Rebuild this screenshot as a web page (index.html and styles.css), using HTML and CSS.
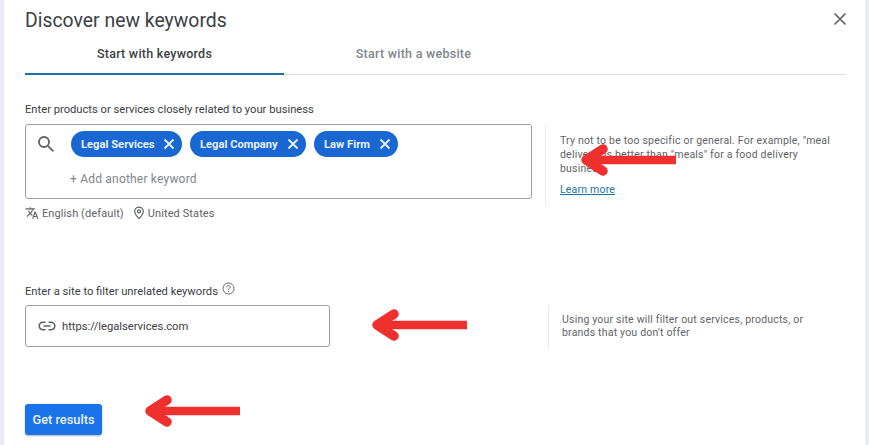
FILE: index.html
```html
<!DOCTYPE html>
<html lang="en">
<head>
    <meta charset="UTF-8">
    <meta name="viewport" content="width=device-width, initial-scale=1.0">
    <title>Discover new keywords</title>
    <link rel="stylesheet" href="styles.css">
</head>
<body>
    <div class="dialog">
        <div class="header">
            <h1>Discover new keywords</h1>
            <svg class="close" width="14" height="14" viewBox="0 0 14 14"><path d="M1.5 1.5l11 11M12.5 1.5l-11 11"/></svg>
        </div>

        <div class="tabs">
            <div class="tab active">Start with keywords</div>
            <div class="tab">Start with a website</div>
        </div>

        <div class="label first-label">Enter products or services closely related to your business</div>
        <div class="row">
            <div class="keyword-box">
                <svg class="search" width="18" height="18" viewBox="0 0 18 18"><circle cx="7" cy="7" r="5"/><path d="M10.8 10.8l5.6 5.6"/></svg>
                <div class="keyword-main">
                    <div class="chips">
                        <span class="chip chip-services">Legal Services<svg width="12" height="12" viewBox="0 0 12 12"><path d="M1.5 1.5l9 9M10.5 1.5l-9 9"/></svg></span>
                        <span class="chip chip-company">Legal Company<svg width="12" height="12" viewBox="0 0 12 12"><path d="M1.5 1.5l9 9M10.5 1.5l-9 9"/></svg></span>
                        <span class="chip chip-firm">Law Firm<svg width="12" height="12" viewBox="0 0 12 12"><path d="M1.5 1.5l9 9M10.5 1.5l-9 9"/></svg></span>
                    </div>
                    <div class="add-keyword">+ Add another keyword</div>
                </div>
            </div>
            <div class="hint hint-top">
                <p>Try not to be too specific or general. For example, "meal delivery" is better than "meals" for a food delivery business</p>
                <a href="#">Learn more</a>
            </div>
        </div>

        <div class="meta">
            <svg class="translate" width="14" height="14" viewBox="0 0 24 24"><path d="M12.87 15.07l-2.54-2.51.03-.03A17.5 17.5 0 0 0 14.07 6H17V4h-7V2H8v2H1v2h11.17C11.5 7.92 10.44 9.75 9 11.35 8.07 10.32 7.3 9.19 6.69 8h-2c.73 1.63 1.73 3.17 2.98 4.56l-5.09 5.02L4 19l5-5 3.11 3.11.76-2.04zM18.5 10h-2L12 22h2l1.12-3h4.75L21 22h2l-4.5-12zm-2.62 7l1.62-4.33L19.12 17h-3.24z"/></svg>
            <span>English (default)</span>
            <svg class="pin" width="12" height="14" viewBox="0 0 12 14"><path d="M6 1.2c-2.5 0-4.3 1.9-4.3 4.2C1.700 8 4 10.500 6 12.600c2-2.100 4.300-4.600 4.300-7.200C10.300 3.100 8.500 1.200 6 1.200z"/><circle cx="6" cy="5.400" r="1.500"/></svg>
            <span>United States</span>
        </div>

        <div class="label second-label">Enter a site to filter unrelated keywords
            <svg class="help" width="13" height="13" viewBox="0 0 13 13"><circle cx="6.500" cy="6.500" r="5.500"/><path d="M4.700 5.200c0-1 .8-1.700 1.800-1.700s1.800.7 1.800 1.600c0 1.300-1.800 1.300-1.800 2.700"/><path d="M6.500 9v1"/></svg>
        </div>
        <div class="row">
            <div class="site-box">
                <svg class="link" width="18" height="10" viewBox="0 0 18 10"><path d="M7.500 1.200H5a3.800 3.800 0 0 0 0 7.600h2.500M10.500 1.200H13a3.800 3.800 0 0 1 0 7.600h-2.500M5.500 5h7"/></svg>
                <span>https://legalservices.com</span>
            </div>
            <div class="hint hint-bottom">
                <p>Using your site will filter out services, products, or brands that you don't offer</p>
            </div>
        </div>

        <button class="results">Get results</button>
    </div>

    <!-- red annotation arrows drawn over the screenshot -->
    <svg class="arrow arrow-hint" width="100" height="32" viewBox="0 0 100 32"><path d="M96 16H8"/><path class="head" d="M23 5L6 16l17 11"/></svg>
    <svg class="arrow arrow-site" width="100" height="32" viewBox="0 0 100 32"><path d="M96 16H8"/><path class="head" d="M23 5L6 16l17 11"/></svg>
    <svg class="arrow arrow-button" width="100" height="32" viewBox="0 0 100 32"><path d="M96 16H8"/><path class="head" d="M23 5L6 16l17 11"/></svg>
</body>
</html>
```

FILE: styles.css
```css
html, body {
    height: 100%;
}
body {
    margin: 0;
    background-color: #e8ebf3;
    font-family: Roboto, Arial, sans-serif;
    color: #3c4043;
    overflow: hidden;
}
.dialog {
    margin: 0 4px;
    height: 445px;
    padding: 0 18px 0 21px;
    background-color: #fff;
    box-sizing: border-box;
}
.header {
    display: flex;
    justify-content: space-between;
    align-items: center;
    height: 41px;
}
h1 {
    margin: 0;
    font-size: 19.400px;
    font-weight: 400;
    color: #3c4043;
}
.close {
    margin-bottom: 3px;
}
.close path {
    fill: none;
    stroke: #5f6368;
    stroke-width: 1.7;
}
.tabs {
    display: flex;
    height: 34px;
    margin-right: 1px;
    border-bottom: 1px solid #dadce0;
    box-sizing: border-box;
}
.tab {
    width: 259px;
    padding-top: 5px;
    text-align: center;
    font-size: 12.500px;
    font-weight: 500;
    letter-spacing: 0.25px;
    color: #80868b;
    box-sizing: border-box;
}
.tab.active {
    height: 34px;
    border-bottom: 2px solid #1a73a8;
    color: #3c4043;
}
.label {
    font-size: 11.200px;
    line-height: 14px;
    color: #3c4043;
}
.first-label {
    margin-top: 28px;
    margin-bottom: 7px;
}
.second-label {
    margin-top: 65px;
    margin-bottom: 6px;
    display: flex;
    align-items: flex-start;
    gap: 4px;
}
.help {
    margin-top: -3px;
}
.row {
    display: flex;
}
.keyword-box {
    display: flex;
    width: 507px;
    height: 75px;
    padding: 6px 0 0 11px;
    border: 1px solid #9aa0a6;
    border-radius: 3px;
    box-sizing: border-box;
}
.search {
    margin: 4px 16px 0 0;
}
.search circle, .search path {
    fill: none;
    stroke: #5f6368;
    stroke-width: 1.800;
}
.chips {
    display: flex;
    gap: 8px;
}
.chip {
    display: flex;
    justify-content: space-between;
    align-items: center;
    height: 26px;
    padding: 0 7px 0 10px;
    border-radius: 13px;
    background-color: #1967d2;
    color: #e8f0fe;
    font-size: 11.200px;
    font-weight: 700;
    box-sizing: border-box;
}
.chip svg path {
    fill: none;
    stroke: #e8f0fe;
    stroke-width: 1.800;
}
.chip-services {
    width: 111px;
}
.chip-company {
    width: 116px;
}
.chip-firm {
    width: 84px;
}
.add-keyword {
    margin-top: 15px;
    margin-left: -1px;
    font-size: 12px;
    line-height: 15px;
    letter-spacing: 0.2px;
    color: #80868b;
}
.hint {
    border-left: 1px solid #e8eaed;
    font-size: 10.500px;
    line-height: 14px;
    letter-spacing: 0.2px;
    color: #5f6368;
}
.hint p {
    margin: 0;
}
.hint a {
    display: block;
    margin-top: 7px;
    color: #1a73a8;
}
.hint-top {
    width: 286px;
    height: 81px;
    margin-left: 13px;
    padding: 10px 0 0 14px;
    box-sizing: border-box;
}
.hint-bottom {
    width: 270px;
    height: 43px;
    margin-left: 218px;
    padding: 8px 0 0 13px;
    line-height: 13px;
    box-sizing: border-box;
}
.meta {
    display: flex;
    align-items: center;
    height: 14px;
    margin-top: 1px;
    font-size: 11px;
    letter-spacing: 0.1px;
    color: #5f6368;
}
.meta .translate {
    margin-right: 3px;
    fill: #5f6368;
}
.meta .pin {
    margin: 0 3px 0 9px;
}
.pin path, .pin circle {
    fill: none;
    stroke: #5f6368;
    stroke-width: 1.200;
}
.help circle, .help path {
    fill: none;
    stroke: #5f6368;
    stroke-width: 1;
}
.site-box {
    display: flex;
    align-items: center;
    width: 305px;
    height: 42px;
    padding-left: 12px;
    border: 1px solid #9aa0a6;
    border-radius: 3px;
    font-size: 11.200px;
    color: #3c4043;
    box-sizing: border-box;
}
.link {
    margin-right: 6px;
}
.link path {
    fill: none;
    stroke: #5f6368;
    stroke-width: 1.600;
}
.results {
    display: block;
    width: 77px;
    height: 31px;
    margin-top: 56px;
    padding: 0;
    border: none;
    border-radius: 3px;
    background-color: #1a73e8;
    box-shadow: 0 1px 2px rgba(60, 64, 67, 0.4);
    color: #e8f0fe;
    font-family: inherit;
    font-size: 12.800px;
    font-weight: 500;
}
.arrow {
    position: absolute;
}
.arrow path {
    fill: none;
    stroke: #f0302f;
    stroke-width: 8.500;
}
.arrow .head {
    stroke-width: 9.500;
    stroke-linecap: round;
    stroke-linejoin: round;
}
.arrow-hint {
    left: 580px;
    top: 144px;
}
.arrow-site {
    left: 371px;
    top: 309px;
}
.arrow-button {
    left: 144px;
    top: 395px;
}
```
